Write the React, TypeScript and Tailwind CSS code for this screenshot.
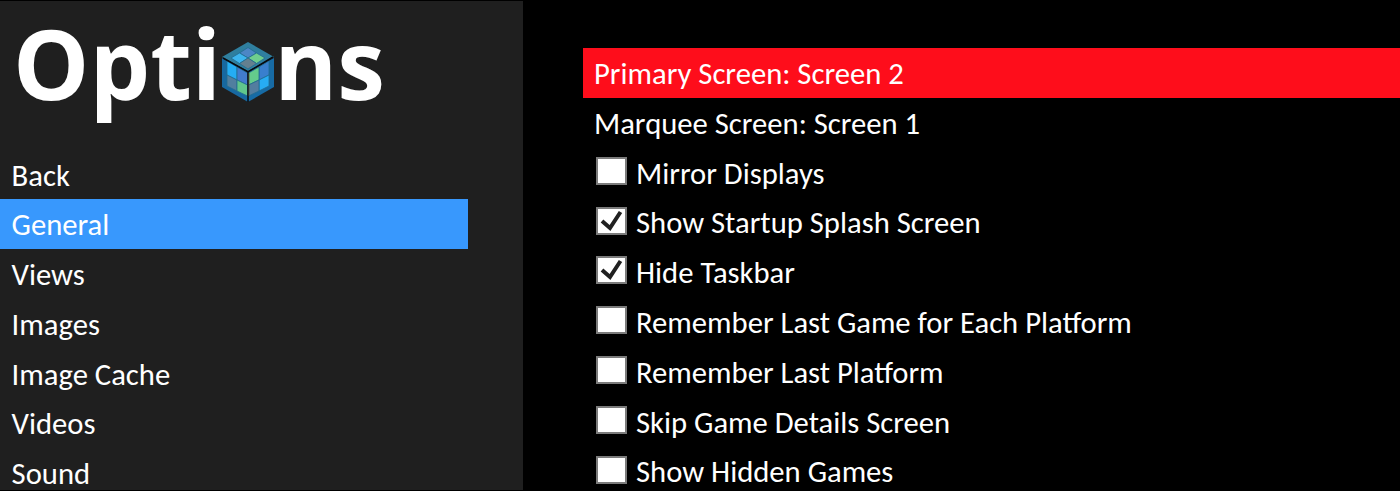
import React from "react";

const menu = ["Back", "General", "Views", "Images", "Image Cache", "Videos", "Sound"];

const settings = [
  { name: "Mirror Displays", checked: false },
  { name: "Show Startup Splash Screen", checked: true },
  { name: "Hide Taskbar", checked: true },
  { name: "Remember Last Game for Each Platform", checked: false },
  { name: "Remember Last Platform", checked: false },
  { name: "Skip Game Details Screen", checked: false },
  { name: "Show Hidden Games", checked: false },
];

const Cube = () => {
  return (
    <svg className="w-[52px] h-[60px] shrink-0" viewBox="0 0 52 60">
      <path d="M26 0L52 15L26 29L0 15Z" fill="#2f7f9f" />
      <path d="M0 16L26 30V60L0 45Z" fill="#1768a0" />
      <path d="M52 16L26 30V60L52 45Z" fill="#176ba5" />
      <g stroke="#226c91" strokeWidth="0.8">
        <path d="M26 5.500L34.500 11L26 16L17.500 11Z" fill="#4c86c5" />
        <path d="M17.500 11L26 16L17.500 21.500L9 16Z" fill="#3db5ee" />
        <path d="M34.500 11L43 16L34.500 21.500L26 16Z" fill="#6fcd8e" />
        <path d="M26 16L34.500 21.500L26 27L17.500 21.500Z" fill="#64808f" />
        <path d="M5 19L15 25V38L5 33Z" fill="#24adf4" />
        <path d="M15 25L25.500 31V43L15 38Z" fill="#427bcd" />
        <path d="M5 33L15 38V49L5 44Z" fill="#517f9f" />
        <path d="M15 38L25.500 43V54L15 49Z" fill="#60c68c" />
        <path d="M47 19L37 25V38L47 33Z" fill="#397fce" />
        <path d="M37 25L26.500 31V43L37 38Z" fill="#64cb8c" />
        <path d="M47 33L37 38V49L47 44Z" fill="#27acf3" />
        <path d="M37 38L26.500 43V54L37 49Z" fill="#537d9f" />
      </g>
      <path d="M1 16L26 30L51 15M26 30V60" fill="none" stroke="#080b10" strokeWidth="1.500" />
      <path d="M27 31V54" stroke="#604a20" strokeWidth="0.700" />
    </svg>
  );
};

const CheckBox = ({ checked }: { checked: boolean }) => {
  return (
    <span className="w-[31px] h-[28px] mt-[9.3px] shrink-0 bg-white border-2 border-[#7b7b7b]">
      {checked && (
        <svg className="w-[27px] h-[24px]" viewBox="0 0 27 24" fill="none">
          <path d="M4 12L12 19L22.500 3" stroke="#202020" strokeWidth="4" />
        </svg>
      )}
    </span>
  );
};

const App = () => {
  return (
    <div className="flex w-full h-[491px] overflow-hidden bg-black text-white font-['Carlito','Lato',sans-serif] text-[30.65px] leading-[51px]">
      <aside className="w-[523px] h-[489px] mt-px shrink-0 overflow-hidden bg-[#1f1f1f]">
        <h1 className="flex h-[148.500px] pl-[13px] font-['Open_Sans',sans-serif] font-bold text-[96px] leading-[123px]">
          <span>Opti</span>
          <span className="ml-px mt-[41px] w-[52px] h-[60px] flex">
            <Cube />
          </span>
          <span>ns</span>
        </h1>
        <nav>
          {menu.map((item, idx) => (
            <div
              key={idx}
              className={`h-[49.8px] w-[468px] pl-[11.6px] whitespace-nowrap ${item === "General" ? "bg-[#3898fd]" : ""}`}
            >
              {item}
            </div>
          ))}
        </nav>
      </aside>

      <main className="flex-1 min-w-0 pl-[60px] pt-12">
        <div className="h-[49.8px] pl-[11px] bg-[#fe0d1b] whitespace-nowrap">
          Primary Screen: Screen 2
        </div>
        <div className="h-[49.8px] pl-[11px] whitespace-nowrap">
          Marquee Screen: Screen 1
        </div>
        {settings.map((item, idx) => (
          <div key={idx} className="flex h-[49.8px] pl-[13px] gap-[9px] whitespace-nowrap">
            <CheckBox checked={item.checked} />
            <span>{item.name}</span>
          </div>
        ))}
      </main>
    </div>
  );
};

export default App;
